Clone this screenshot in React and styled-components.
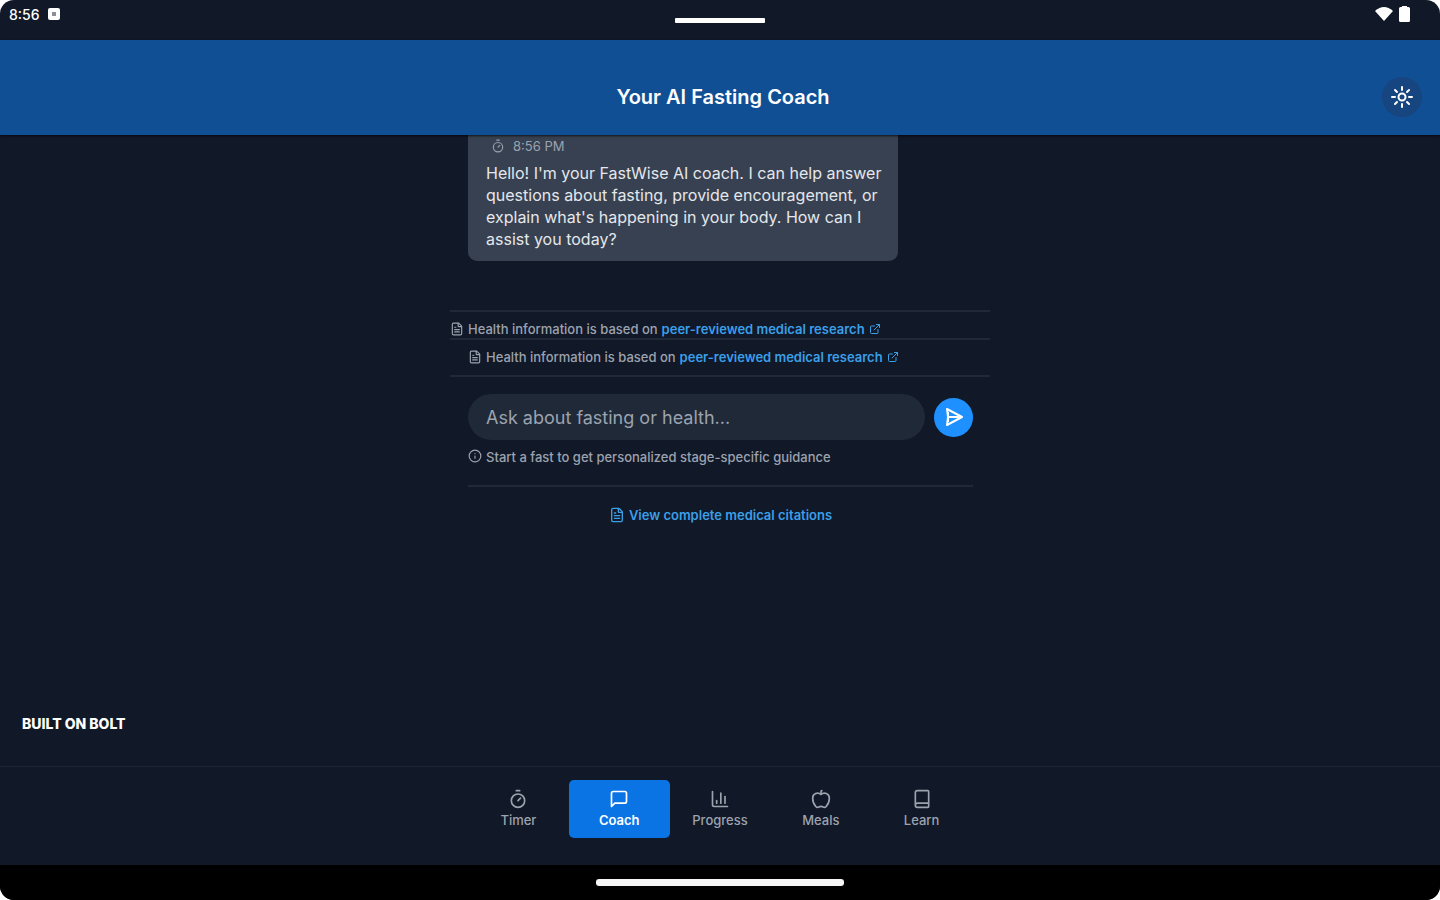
import React, { useState } from 'react';
import styled, { createGlobalStyle } from 'styled-components';
import {
  Apple,
  Book,
  ChartColumn,
  ExternalLink,
  FileText,
  Info,
  Timer,
} from 'lucide-react';

const GlobalStyle = createGlobalStyle`
  * {
    box-sizing: border-box;
  }

  body {
    margin: 0;
    background: #fff;
    font-family: Inter, 'Liberation Sans', sans-serif;
  }

  button,
  input {
    font-family: inherit;
  }
`;

const Screen = styled.div`
  min-height: 100vh;
  display: flex;
  flex-direction: column;
  overflow: hidden;
  border-radius: 14px;
  background: #111827;
  color: #e5e7eb;
`;

// system status bar
const StatusBar = styled.div`
  height: 40px;
  padding: 4px 30px 0 9px;
  display: grid;
  grid-template-columns: 1fr auto 1fr;
  align-items: start;
  color: #fff;
`;

const StatusGroup = styled.div`
  height: 20px;
  display: flex;
  align-items: center;
  justify-content: ${(props) => (props.$end ? 'flex-end' : 'flex-start')};
  gap: ${(props) => (props.$end ? '6px' : '8px')};
  font-size: 14px;
  font-weight: 500;
`;

const Handle = styled.div`
  width: 90px;
  height: 5px;
  margin: 14px 0 0 21px;
  border-radius: 1px;
  background: #fff;
`;

const Header = styled.header`
  position: relative;
  padding: 37px 18px 18px 24px;
  display: grid;
  grid-template-columns: 1fr auto 1fr;
  align-items: center;
  background: #114f95;
  box-shadow: 0 1px 2px rgba(0, 0, 0, 0.7);
`;

const Title = styled.h1`
  grid-column: 2;
  margin: 0;
  color: #fff;
  font-size: 20px;
  font-weight: 600;
  line-height: 24px;
`;

const ThemeButton = styled.button`
  width: 40px;
  height: 40px;
  padding: 0;
  display: flex;
  align-items: center;
  justify-content: center;
  justify-self: end;
  border: none;
  border-radius: 50%;
  background: #17457f;
  color: #fff;
  cursor: pointer;
`;

const Main = styled.main`
  flex: 1;
  width: 100%;
  max-width: 540px;
  margin: 0 auto;
`;

const Bubble = styled.article`
  max-width: 430px;
  margin: 0 18px 49px;
  padding: 0 12px 11px 18px;
  border-radius: 0 0 9px 9px;
  background: #374151;
`;

const BubbleTime = styled.div`
  height: 22px;
  margin-bottom: 5px;
  padding-left: 5px;
  display: flex;
  align-items: center;
  gap: 8px;
  color: #9ca3af;
  font-size: 13px;
`;

const BubbleText = styled.p`
  margin: 0;
  font-size: 16px;
  line-height: 22px;
`;

const Source = styled.div`
  height: ${(props) => (props.$inset ? '37px' : '28px')};
  padding: ${(props) => (props.$inset ? '0 18px 2px' : '8px 0 0')};
  display: flex;
  align-items: center;
  gap: 4px;
  border-top: 2px solid #1f2937;
  color: #9ca3af;
  font-size: 13px;
  font-weight: 500;
`;

const TextLink = styled.a`
  display: inline-flex;
  align-items: center;
  gap: 4px;
  color: #3b9fe8;
  font-size: 13px;
  font-weight: 600;
  text-decoration: none;
`;

const Composer = styled.section`
  padding: 17px 17px 0 18px;
  border-top: 2px solid #1f2937;
`;

const AskForm = styled.form`
  display: flex;
  align-items: center;
  gap: 9px;
`;

const AskInput = styled.input`
  flex: 1;
  min-width: 0;
  height: 46px;
  padding: 0 18px;
  border: none;
  border-radius: 23px;
  outline: none;
  background: #1f2937;
  color: #e5e7eb;
  font-size: 18px;

  &::placeholder {
    color: #9ca3af;
    opacity: 1;
  }
`;

const SendButton = styled.button`
  width: 39px;
  height: 39px;
  padding: 0;
  display: flex;
  align-items: center;
  justify-content: center;
  border: none;
  border-radius: 50%;
  background: #1e90ff;
  color: #fff;
  cursor: pointer;
`;

const Hint = styled.p`
  height: 36px;
  margin: 9px 0 0;
  display: flex;
  align-items: flex-start;
  gap: 4px;
  color: #9ca3af;
  font-size: 13px;
  font-weight: 500;
  line-height: 16px;
`;

const Citations = styled.div`
  padding: 20px 0;
  display: flex;
  justify-content: center;
  border-top: 2px solid #1f2937;
`;

const Badge = styled.p`
  margin: 0 0 32px 22px;
  color: #fff;
  font-size: 14px;
  font-weight: 800;
  line-height: 20px;
`;

const TabBar = styled.nav`
  padding: 13px 0 27px;
  border-top: 1px solid #1d2534;
`;

const TabList = styled.div`
  max-width: 504px;
  margin: 0 auto;
  display: flex;
`;

const Tab = styled.button`
  flex: 1;
  height: 58px;
  padding: 0 0 2px;
  display: flex;
  flex-direction: column;
  align-items: center;
  justify-content: center;
  gap: 3px;
  border: none;
  border-radius: 5px;
  background: ${(props) => (props.$active ? '#0b74e5' : 'transparent')};
  color: ${(props) => (props.$active ? '#fff' : '#9ca3af')};
  font-size: 13px;
  font-weight: ${(props) => (props.$active ? '600' : '500')};
  line-height: 16px;
  cursor: pointer;
`;

const HomeBar = styled.div`
  height: 35px;
  display: flex;
  align-items: center;
  justify-content: center;
  background: #000;
`;

const HomeHandle = styled.div`
  width: 248px;
  height: 7px;
  border-radius: 3px;
  background: #f5f5f5;
`;

const AppIcon = () => (
  <svg width="12" height="12" viewBox="0 0 12 12">
    <rect width="12" height="12" rx="2" fill="#fff" />
    <rect x="4" y="4" width="4" height="4" fill="#8b8f98" />
  </svg>
);

const WifiIcon = () => (
  <svg width="18" height="14" viewBox="0 0 18 14">
    <path d="M9 14 0 4Q9-4 18 4Z" fill="#fff" />
  </svg>
);

const BatteryIcon = () => (
  <svg width="11" height="16" viewBox="0 0 11 16">
    <path d="M3 0h5v1h1.500q1.500 0 1.500 1.500v12q0 1.500-1.500 1.500h-8Q0 16 0 14.500v-12Q0 1 1.500 1H3Z" fill="#fff" />
  </svg>
);

const SunIcon = () => (
  <svg width="24" height="24" viewBox="0 0 24 24" fill="none" stroke="currentColor" strokeWidth="2" strokeLinecap="round">
    <circle cx="12" cy="12" r="3.500" />
    <path d="M12 2v3M12 19v3M2 12h3M19 12h3M5 5l2 2M17 17l2 2M5 19l2-2M17 7l2-2" />
  </svg>
);

const SendIcon = () => (
  <svg width="20" height="20" viewBox="0 0 20 20" fill="none" stroke="currentColor" strokeWidth="2" strokeLinejoin="round">
    <path d="M3 2 18 10 3 18 4 10Z" />
    <path d="M4 10h13" />
    <path d="M4 5v10" />
  </svg>
);

const ChatIcon = ({ size }) => (
  <svg width={size} height={size} viewBox="0 0 24 24" fill="none" stroke="currentColor" strokeWidth="2" strokeLinejoin="round">
    <path d="M21 15a2 2 0 0 1-2 2H7l-4 4V5a2 2 0 0 1 2-2h14a2 2 0 0 1 2 2z" />
  </svg>
);

const tabs = [
  { name: 'Timer', Icon: Timer },
  { name: 'Coach', Icon: ChatIcon },
  { name: 'Progress', Icon: ChartColumn },
  { name: 'Meals', Icon: Apple },
  { name: 'Learn', Icon: Book },
];

const SourceNote = ({ inset }) => (
  <Source $inset={inset}>
    <FileText size={14} />
    <span>Health information is based on</span>
    <TextLink href="#research">
      peer-reviewed medical research
      <ExternalLink size={12} />
    </TextLink>
  </Source>
);

const App = () => {
  const [question, setQuestion] = useState('');
  const [activeTab, setActiveTab] = useState('Coach');

  return (
    <>
      <GlobalStyle />
      <Screen>
        <StatusBar>
          <StatusGroup>
            8:56 <AppIcon />
          </StatusGroup>
          <Handle />
          <StatusGroup $end>
            <WifiIcon />
            <BatteryIcon />
          </StatusGroup>
        </StatusBar>
        <Header>
          <Title>Your AI Fasting Coach</Title>
          <ThemeButton type="button" aria-label="Light theme">
            <SunIcon />
          </ThemeButton>
        </Header>
        <Main>
          <Bubble>
            <BubbleTime>
              <Timer size={14} />
              8:56 PM
            </BubbleTime>
            <BubbleText>
              Hello! I&apos;m your FastWise AI coach. I can help answer questions about fasting,
              provide encouragement, or explain what&apos;s happening in your body. How can I
              assist you today?
            </BubbleText>
          </Bubble>
          <SourceNote />
          <SourceNote inset />
          <Composer>
            <AskForm onSubmit={(event) => event.preventDefault()}>
              <AskInput
                aria-label="Question"
                placeholder="Ask about fasting or health..."
                value={question}
                onChange={(event) => setQuestion(event.target.value)}
              />
              <SendButton type="submit" aria-label="Send">
                <SendIcon />
              </SendButton>
            </AskForm>
            <Hint>
              <Info size={14} />
              Start a fast to get personalized stage-specific guidance
            </Hint>
            <Citations>
              <TextLink href="#citations">
                <FileText size={16} />
                View complete medical citations
              </TextLink>
            </Citations>
          </Composer>
        </Main>
        <Badge>BUILT ON BOLT</Badge>
        <TabBar>
          <TabList>
            {tabs.map(({ name, Icon }) => (
              <Tab
                key={name}
                type="button"
                $active={name === activeTab}
                onClick={() => setActiveTab(name)}
              >
                <Icon size={20} />
                {name}
              </Tab>
            ))}
          </TabList>
        </TabBar>
        <HomeBar>
          <HomeHandle />
        </HomeBar>
      </Screen>
    </>
  );
};

export default App;
